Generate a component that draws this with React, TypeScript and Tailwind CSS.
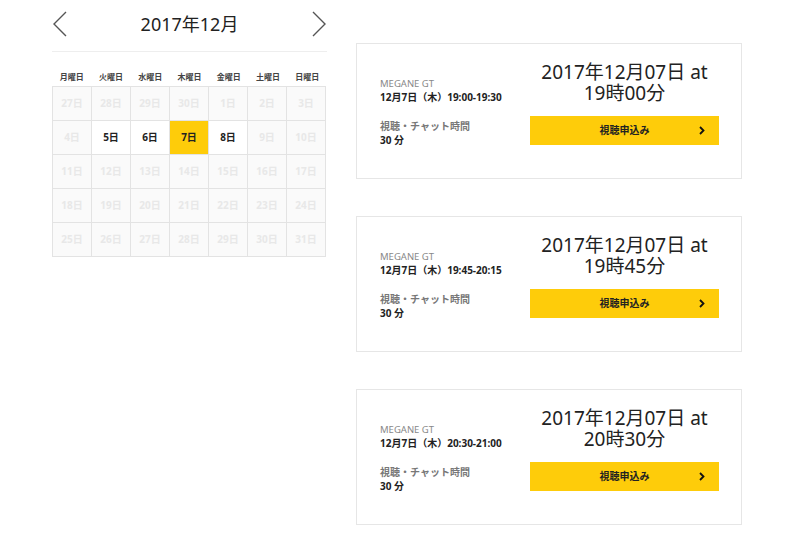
import React from "react";

const FONT = { fontFamily: '"Noto Sans", "Noto Sans CJK JP", sans-serif' };

const weekdays = ["月曜日", "火曜日", "水曜日", "木曜日", "金曜日", "土曜日", "日曜日"];

type Cell = { label: string; kind: "off" | "on" | "sel" };

const cells: Cell[] = [
  ...["27日", "28日", "29日", "30日"].map((l) => ({ label: l, kind: "off" as const })),
  ...Array.from({ length: 31 }, (_, i) => {
    const d = i + 1;
    const kind: Cell["kind"] = d === 7 ? "sel" : d === 5 || d === 6 || d === 8 ? "on" : "off";
    return { label: `${d}日`, kind };
  }),
];

const sessions = [
  { range: "19:00-19:30", time: "19時00分" },
  { range: "19:45-20:15", time: "19時45分" },
  { range: "20:30-21:00", time: "20時30分" },
];

function Arrow({ dir }: { dir: "left" | "right" }) {
  return (
    <svg width="14" height="26" viewBox="0 0 14 26" className="block">
      <polyline
        points={dir === "left" ? "13,1 1,13 13,25" : "1,1 13,13 1,25"}
        fill="none"
        stroke="#555"
        strokeWidth="1.4"
      />
    </svg>
  );
}

function Card({ range, time }: { range: string; time: string }) {
  return (
    <div className="flex h-[136px] border border-[#e6e6e6] bg-white">
      <div className="flex flex-1 flex-col justify-center pl-[23px] pt-[3px]">
        <div className="text-[9.5px] leading-[12px] text-[#888]">MEGANE GT</div>
        <div className="mt-[1px] text-[10px] font-bold leading-[13px] text-[#222]">
          12月7日（木）{range}
        </div>
        <div className="mt-[16px] text-[10px] font-bold leading-[13px] text-[#777]">視聴・チャット時間</div>
        <div className="mt-[1px] text-[10px] font-bold leading-[13px] text-[#222]">30 分</div>
      </div>
      <div className="mr-[22px] mt-[18px] flex w-[189px] flex-col items-center">
        <div className="whitespace-nowrap text-center text-[19px] leading-[21px] text-[#222]">
          2017年12月07日 at
        </div>
        <div className="whitespace-nowrap text-center text-[19px] leading-[21px] text-[#222]">
          {time}
        </div>
        <div className="relative mt-[12px] flex h-[29px] w-[189px] items-center justify-center bg-[#fecc0a]">
          <span className="text-[10px] font-bold text-[#222]">視聴申込み</span>
          <svg width="6" height="9" viewBox="0 0 6 9" className="absolute right-[14px] top-[10px]">
            <polyline points="1,1 4.5,4.5 1,8" fill="none" stroke="#111" strokeWidth="1.8" />
          </svg>
        </div>
      </div>
    </div>
  );
}

export default function App() {
  return (
    <div className="min-h-[533px] w-[800px] bg-white" style={FONT}>
      <div className="flex pl-[52px]">
        <div className="w-[275px]">
          <div className="flex h-[52px] items-center justify-between border-b border-[#eeeeee] pb-[3px] pl-[1px] pr-[1px]">
            <Arrow dir="left" />
            <div className="text-[18px] leading-[24px] text-[#222]">2017年12月</div>
            <Arrow dir="right" />
          </div>
          <div className="grid h-[34px] grid-cols-7 items-end pb-[4px]">
            {weekdays.map((w) => (
              <div key={w} className="text-center text-[8px] font-bold leading-[10px] text-[#444]">
                {w}
              </div>
            ))}
          </div>
          <div className="grid w-[274px] grid-cols-7 border-l border-t border-[#e3e3e3]">
            {cells.map((c, i) => (
              <div
                key={i}
                className={
                  c.kind === "sel"
                    ? "flex h-[34px] items-center justify-center border-b border-r border-[#e3e3e3] bg-[#fecc0a] text-[10px] font-bold text-[#222]"
                    : c.kind === "on"
                    ? "flex h-[34px] items-center justify-center border-b border-r border-[#e3e3e3] bg-white text-[10px] font-bold text-[#222]"
                    : "flex h-[34px] items-center justify-center border-b border-r border-[#e3e3e3] bg-[#fafafa] text-[10px] font-bold text-[#e8e8e8]"
                }
              >
                {c.label}
              </div>
            ))}
          </div>
        </div>
        <div className="ml-[29px] flex w-[386px] flex-col gap-[37px] pt-[43px]">
          {sessions.map((s) => (
            <Card key={s.range} range={s.range} time={s.time} />
          ))}
        </div>
      </div>
    </div>
  );
}
